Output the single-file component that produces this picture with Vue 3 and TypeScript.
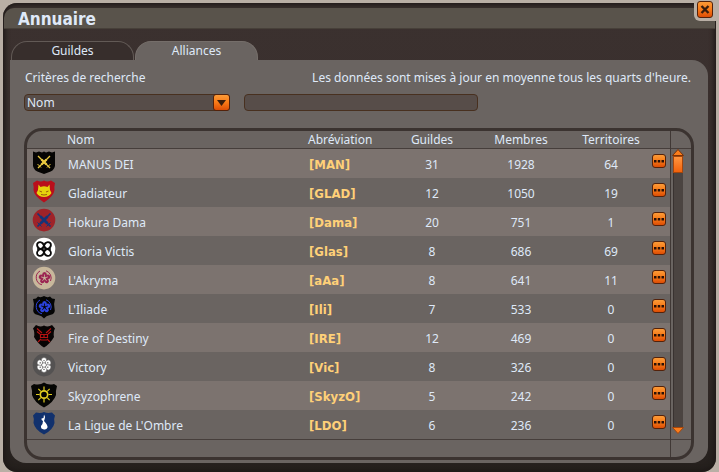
<script setup lang="ts">
import { ref } from 'vue'

type Shape = 'plain' | 'heart' | 'circle' | 'crest' | 'fang' | 'wide' | 'badge'
type Glyph = 'swords' | 'beast' | 'cross' | 'knot' | 'flower' | 'demon' | 'cluster' | 'sun' | 'drop'

interface Alliance {
  name: string
  tag: string
  guilds: number
  members: number
  lands: number
  shape: Shape
  fill: string
  glyph: Glyph
  ink: string
}

const shapes: Record<Shape, string> = {
  plain: 'M1 1.5L4 2.5L7 1.5L10 2.5L12 1.5L14 2.5L17 1.5L20 2.5L23 1.5V16Q22 21 16 22.5L12 24L8 22.5Q2 21 1 16Z',
  heart: 'M5 1.5Q9 3.5 12 1.5Q15 3.5 19 1.5L23 4Q22 8 22.5 11Q22 17 12 23.5Q2 17 1.5 11Q2 8 1 4Z',
  circle: 'M12 .8A11.3 11.3 0 0 1 12 23.4A11.3 11.3 0 0 1 12 .8Z',
  crest: 'M6 1.5Q9 3 12 1Q15 3 18 1.5L20 3.5L23 4Q21.5 9 22.5 13Q24 19 18 20Q14 20.5 12 23.5Q10 20.5 6 20Q0 19 1.5 13Q2.5 9 1 4L4 3.5Z',
  fang: 'M4 1Q8 3.5 12 1.5Q16 3.500 20 1L23 4.500Q21 8 22 13Q18 20 12 23.500Q6 20 2 13Q3 8 1 4.500Z',
  wide: 'M2 2Q8 3.5 12 .5Q16 3.5 22 2L25 4Q23.5 9 24 13Q22 20 12 25.500Q2 20 0 13Q.5 9 -1 4Z',
  badge: 'M4 1.500Q9 2.500 12 1Q15 2.500 20 1.500L23 4.500Q21.500 8 22.500 12Q21 19 12 23.500Q3 19 1.500 12Q2.500 8 1 4.500Z',
}

const alliances: Alliance[] = [
  { name: 'MANUS DEI', tag: 'MAN', guilds: 31, members: 1928, lands: 64, shape: 'plain', fill: '#050403', glyph: 'swords', ink: '#e8c840' },
  { name: 'Gladiateur', tag: 'GLAD', guilds: 12, members: 1050, lands: 19, shape: 'heart', fill: '#b90f1b', glyph: 'beast', ink: '#e6d20c' },
  { name: 'Hokura Dama', tag: 'Dama', guilds: 20, members: 751, lands: 1, shape: 'circle', fill: '#9f2329', glyph: 'cross', ink: '#153478' },
  { name: 'Gloria Victis', tag: 'Glas', guilds: 8, members: 686, lands: 69, shape: 'circle', fill: '#ffffff', glyph: 'knot', ink: '#0b0b0b' },
  { name: "L'Akryma", tag: 'aAa', guilds: 8, members: 641, lands: 11, shape: 'circle', fill: '#c8b79b', glyph: 'flower', ink: '#9b2452' },
  { name: "L'Iliade", tag: 'Ili', guilds: 7, members: 533, lands: 0, shape: 'crest', fill: '#050505', glyph: 'flower', ink: '#2b42df' },
  { name: 'Fire of Destiny', tag: 'IRE', guilds: 12, members: 469, lands: 0, shape: 'fang', fill: '#080404', glyph: 'demon', ink: '#b51212' },
  { name: 'Victory', tag: 'Vic', guilds: 8, members: 326, lands: 0, shape: 'circle', fill: '#545252', glyph: 'cluster', ink: '#ffffff' },
  { name: 'Skyzophrene', tag: 'SkyzO', guilds: 5, members: 242, lands: 0, shape: 'wide', fill: '#050503', glyph: 'sun', ink: '#e3ce20' },
  { name: "La Ligue de L'Ombre", tag: 'LDO', guilds: 6, members: 236, lands: 0, shape: 'badge', fill: '#11316d', glyph: 'drop', ink: '#ffffff' },
]

const petals = [0, 72, 144, 216, 288]
const hexes = [0, 60, 120, 180, 240, 300]
const quarters = [0, 90, 180, 270]
const rays = [0, 45, 90, 135, 180, 225, 270, 315]

const tab = ref('Alliances')
const criterion = ref('Nom')
const query = ref('')
</script>

<template>
  <div class="screen">
    <main class="window">
      <header class="titlebar"><h1>Annuaire</h1></header>
      <div class="corner">
        <button class="orange close" type="button" aria-label="Fermer">
          <svg viewBox="0 0 14 15"><path d="M3.500 4L10.500 11M10.500 4L3.500 11" stroke="#3a1d0c" stroke-width="2.400" /></svg>
        </button>
      </div>

      <nav class="tabs">
        <button
          v-for="t in ['Guildes', 'Alliances']"
          :key="t"
          type="button"
          class="tab"
          :class="{ active: tab === t }"
          @click="tab = t"
        >{{ t }}</button>
      </nav>

      <section class="panel">
        <div class="line">
          <label for="criterion">Critères de recherche</label>
          <p>Les données sont mises à jour en moyenne tous les quarts d'heure.</p>
        </div>
        <div class="filters">
          <div class="picker">
            <select id="criterion" v-model="criterion">
              <option>Nom</option>
              <option>Abréviation</option>
            </select>
            <span class="orange arrow">
              <svg viewBox="0 0 15 15"><path d="M3 5H12L7.500 11Z" fill="#3a1d0c" /></svg>
            </span>
          </div>
          <input v-model="query" class="search" type="text" aria-label="Recherche" />
        </div>

        <div class="frame">
          <div class="list">
            <table>
              <colgroup>
                <col class="c-icon" /><col /><col class="c-tag" /><col class="c-guilds" />
                <col class="c-members" /><col class="c-lands" /><col class="c-more" />
              </colgroup>
              <thead>
                <tr>
                  <th></th>
                  <th class="left">Nom</th>
                  <th class="left">Abréviation</th>
                  <th>Guildes</th>
                  <th>Membres</th>
                  <th>Territoires</th>
                  <th></th>
                </tr>
              </thead>
              <tbody>
                <tr v-for="a in alliances" :key="a.tag">
                  <td class="icon">
                    <svg class="emblem" viewBox="0 0 24 24" fill="none" aria-hidden="true">
                      <path :d="shapes[a.shape]" :fill="a.fill" />
                      <g v-if="a.glyph === 'swords'" :stroke="a.ink">
                        <path d="M6 6L18 18M18 6L6 18" stroke-width="1.400" />
                        <path d="M9.500 9.500L14.500 14.500M14.500 9.500L9.500 14.500" stroke-width="2.400" />
                        <path d="M5.500 14L9 17.500M18.500 14L15 17.500" />
                      </g>
                      <g v-else-if="a.glyph === 'cross'" :stroke="a.ink">
                        <path d="M5.500 5.500L18.500 18.500M18.500 5.500L5.500 18.500" stroke-width="1.600" />
                        <path d="M8.500 8.500L15.500 15.500M15.500 8.500L8.500 15.500" stroke-width="2.800" />
                        <path d="M5.500 14.500L9.500 18.500M18.500 14.500L14.500 18.500" />
                      </g>
                      <g v-else-if="a.glyph === 'beast'">
                        <path d="M6.500 5.500L8.500 8Q12 6.500 15.500 8L17.500 5.500L18 11L19.500 14Q17 18 12 18Q7 18 4.500 14L6 11Z" :fill="a.ink" />
                        <path d="M7.500 12L10 13M16.500 12L14 13M9 15.500Q12 16.500 15 15.500" stroke="#8a3a0e" stroke-width=".8" />
                      </g>
                      <g v-else-if="a.glyph === 'knot'" :stroke="a.ink">
                        <ellipse
                          v-for="q in quarters"
                          :key="q"
                          cx="12"
                          cy="7"
                          rx="3.100"
                          ry="3.600"
                          stroke-width="1.900"
                          :transform="`rotate(${q + 45} 12 12)`"
                        />
                        <path d="M12 9L15 12L12 15L9 12Z" stroke-width="1.200" />
                        <path d="M5 12H8M16 12H19" stroke-width="1.400" />
                      </g>
                      <g v-else-if="a.glyph === 'flower'">
                        <path d="M8 5A7.500 7.500 0 0 0 10 18.800M14 4.800A7.500 7.500 0 0 1 18.500 15" :stroke="a.ink" />
                        <ellipse v-for="p in petals" :key="p" cx="12.500" cy="8.600" rx="2.300" ry="2.500" :fill="a.ink" :transform="`rotate(${p} 12.500 12)`" />
                        <path
                          v-for="p in petals"
                          :key="`v${p}`"
                          d="M12.500 12V8.500"
                          :stroke="a.fill"
                          stroke-width=".8"
                          :transform="`rotate(${p} 12.500 12)`"
                        />
                      </g>
                      <g v-else-if="a.glyph === 'demon'" :stroke="a.ink">
                        <path d="M5 4.500L10 9M19 4.500L14 9M5 7.500L8 10M19 7.500L16 10M8 10.500H16M9 13.500H15M6 18L9 15M18 18L15 15" stroke-width="1.200" />
                        <path d="M9 16H15M8.500 10V14M15.500 10V14M12 10V13" stroke-width="1.200" />
                      </g>
                      <g v-else-if="a.glyph === 'cluster'">
                        <circle cx="12" cy="12" r="2" :fill="a.ink" />
                        <circle
                          v-for="h in hexes"
                          :key="h"
                          cx="12"
                          cy="7.200"
                          r="2.700"
                          :fill="a.ink"
                          :stroke="a.fill"
                          stroke-width=".5"
                          :transform="`rotate(${h} 12 12)`"
                        />
                        <circle v-for="h in hexes" :key="`s${h}`" cx="12" cy="7.600" r=".7" :fill="a.fill" :transform="`rotate(${h} 12 12)`" />
                      </g>
                      <g v-else-if="a.glyph === 'sun'" :stroke="a.ink">
                        <circle cx="12" cy="12.500" r="3.700" stroke-width="1.700" />
                        <path v-for="r in rays" :key="r" d="M12 8V4.500" stroke-width="1.200" :transform="`rotate(${r} 12 12.500)`" />
                      </g>
                      <path
                        v-else
                        d="M12 3.500Q14 6 12.500 8.500L12 10Q16 14 15.500 16.500Q14.500 19 12 18.500Q8.500 18 9 15Q11 13 11 10Q9 9 9.500 7.500L11.500 7Z"
                        :fill="a.ink"
                      />
                    </svg>
                  </td>
                  <td class="name">{{ a.name }}</td>
                  <td class="tag">[{{ a.tag }}]</td>
                  <td>{{ a.guilds }}</td>
                  <td>{{ a.members }}</td>
                  <td>{{ a.lands }}</td>
                  <td class="more">
                    <button class="orange dots" type="button" :aria-label="`Options ${a.name}`">
                      <svg viewBox="0 0 12 12"><path d="M1 5h2.500v2.500H1zM4.750 5h2.500v2.500h-2.500zM8.500 5H11v2.500H8.500z" fill="#2a1006" /></svg>
                    </button>
                  </td>
                </tr>
              </tbody>
            </table>
            <div class="footer"></div>
          </div>
          <div class="rail">
            <div class="rail-head"></div>
            <div class="scroller">
              <svg viewBox="0 0 12 7"><path d="M.5 6.500L6 .5L11.500 6.500Z" fill="#fa7d1c" stroke="#7a3208" /></svg>
              <div class="track"><div class="thumb"></div></div>
              <svg viewBox="0 0 12 7"><path d="M.5 .5L6 6.500L11.500 .5Z" fill="#fa7d1c" stroke="#a5460c" /></svg>
            </div>
            <div class="footer"></div>
          </div>
        </div>
      </section>
    </main>
  </div>
</template>

<style>
body {
  margin: 0;
  background: #b9afa5;
}
</style>

<style scoped>
* {
  box-sizing: border-box;
}

.screen {
  min-height: 100vh;
  padding: 3px 3px 2px;
  font-family: 'Noto Sans', 'DejaVu Sans Condensed', sans-serif;
  font-size: 12px;
  line-height: 16px;
  color: #dfe9f8;
}

button,
input,
select {
  font: inherit;
  color: inherit;
}

svg {
  display: block;
}

.window {
  position: relative;
  padding: 5px 8px 9px 7px;
  border-radius: 14px 8px 14px 14px;
  background: linear-gradient(#3b312f, #382e2c 70%, #25201d);
  box-shadow: inset 0 0 5px 2px #1e1917;
}

.titlebar {
  margin: 0 -7px 0 -6px;
  padding: 1px 14px 0;
  height: 21px;
  border-radius: 10px 0 0 0;
  border-bottom: 1px solid #474039;
  background: #59534b;
}

h1 {
  margin: 0;
  font-family: 'DejaVu Sans Condensed', 'DejaVu Sans', sans-serif;
  font-size: 17px;
  line-height: 20px;
}

.corner {
  position: absolute;
  top: -3px;
  right: -3px;
  padding: 1px 6px 3px 3px;
  border-radius: 0 0 0 6px;
  background: #b9afa5;
}

.orange {
  display: block;
  padding: 0;
  border: 1px solid #54220a;
  border-radius: 3px;
  background: linear-gradient(#fb9b38, #f97a17 50%, #dc4d05);
}

.close {
  width: 16px;
  height: 17px;
}

.tabs {
  display: flex;
  gap: 1px;
  padding: 12px 0 0 1px;
}

.tab {
  width: 123px;
  height: 19px;
  padding: 0;
  border: 1px solid #625a56;
  border-bottom: 0;
  border-radius: 16px 16px 0 0;
  background: #372e2c;
}

.tab.active {
  border-color: #756e6a;
  background: #6a6461;
}

.panel {
  padding: 10px 14px 3px;
  border-radius: 0 16px 16px 16px;
  background: #6a6461;
}

.line {
  display: flex;
  justify-content: space-between;
  padding: 0 3px 0 1px;
}

.line p {
  margin: 0;
}

.filters {
  display: flex;
  gap: 14px;
  margin: 8px 0 17px;
}

.picker {
  position: relative;
  width: 206px;
}

.picker select,
.search {
  display: block;
  height: 17px;
  margin: 0;
  border: 1px solid #48301f;
  border-radius: 4px;
  background: #574d49;
  outline: 0;
}

.picker select {
  width: 100%;
  padding: 0 20px 0 2px;
  appearance: none;
  line-height: 16px;
}

.search {
  width: 234px;
  padding: 0 4px;
}

.arrow {
  position: absolute;
  top: 0;
  right: 0;
  width: 17px;
  height: 17px;
  pointer-events: none;
}

.frame {
  display: flex;
  border: 3px solid #3b3330;
  border-radius: 18px;
  overflow: hidden;
}

.list {
  flex: 1;
  border-right: 1px solid #403835;
}

table {
  width: 100%;
  table-layout: fixed;
  border-collapse: separate;
  border-spacing: 0;
}

.c-icon { width: 40px; }
.c-tag { width: 84px; }
.c-guilds { width: 80px; }
.c-members { width: 98px; }
.c-lands { width: 82px; }
.c-more { width: 18px; }

th {
  height: 18px;
  padding: 0;
  border-bottom: 1px solid #463e3b;
  font-weight: normal;
  text-align: center;
}

th.left {
  text-align: left;
}

td {
  height: 29px;
  padding: 2px 0 0;
  text-align: center;
}

tbody tr:nth-child(odd) {
  background: #7c736f;
}

td.name {
  padding-left: 1px;
  text-align: left;
}

td.tag {
  padding-left: 1px;
  text-align: left;
  font-family: 'DejaVu Sans Condensed', 'DejaVu Sans', sans-serif;
  font-size: 13px;
  font-weight: bold;
  color: #ffd078;
}

td.icon {
  padding: 1px 0 0 5px;
  vertical-align: top;
}

.emblem {
  width: 24px;
  height: 24px;
  overflow: visible;
}

td.more {
  padding: 5px 0 0;
  vertical-align: top;
}

.dots {
  width: 14px;
  height: 14px;
}

.footer {
  height: 18px;
  border-top: 1px solid #463e3b;
}

.rail {
  display: flex;
  flex-direction: column;
  width: 20px;
}

.rail-head {
  height: 18px;
  border-bottom: 1px solid #463e3b;
}

.scroller {
  flex: 1;
  display: flex;
  flex-direction: column;
  width: 12px;
  margin-left: 1px;
  padding-bottom: 5px;
}

.track {
  flex: 1;
  margin: 0 1px;
  border-left: 1px solid #393230;
  background: #4b4441;
}

.thumb {
  height: 17px;
  margin-left: -1px;
  border: 1px solid #a5460c;
  background: linear-gradient(#ff9540, #f2620c);
}
</style>
